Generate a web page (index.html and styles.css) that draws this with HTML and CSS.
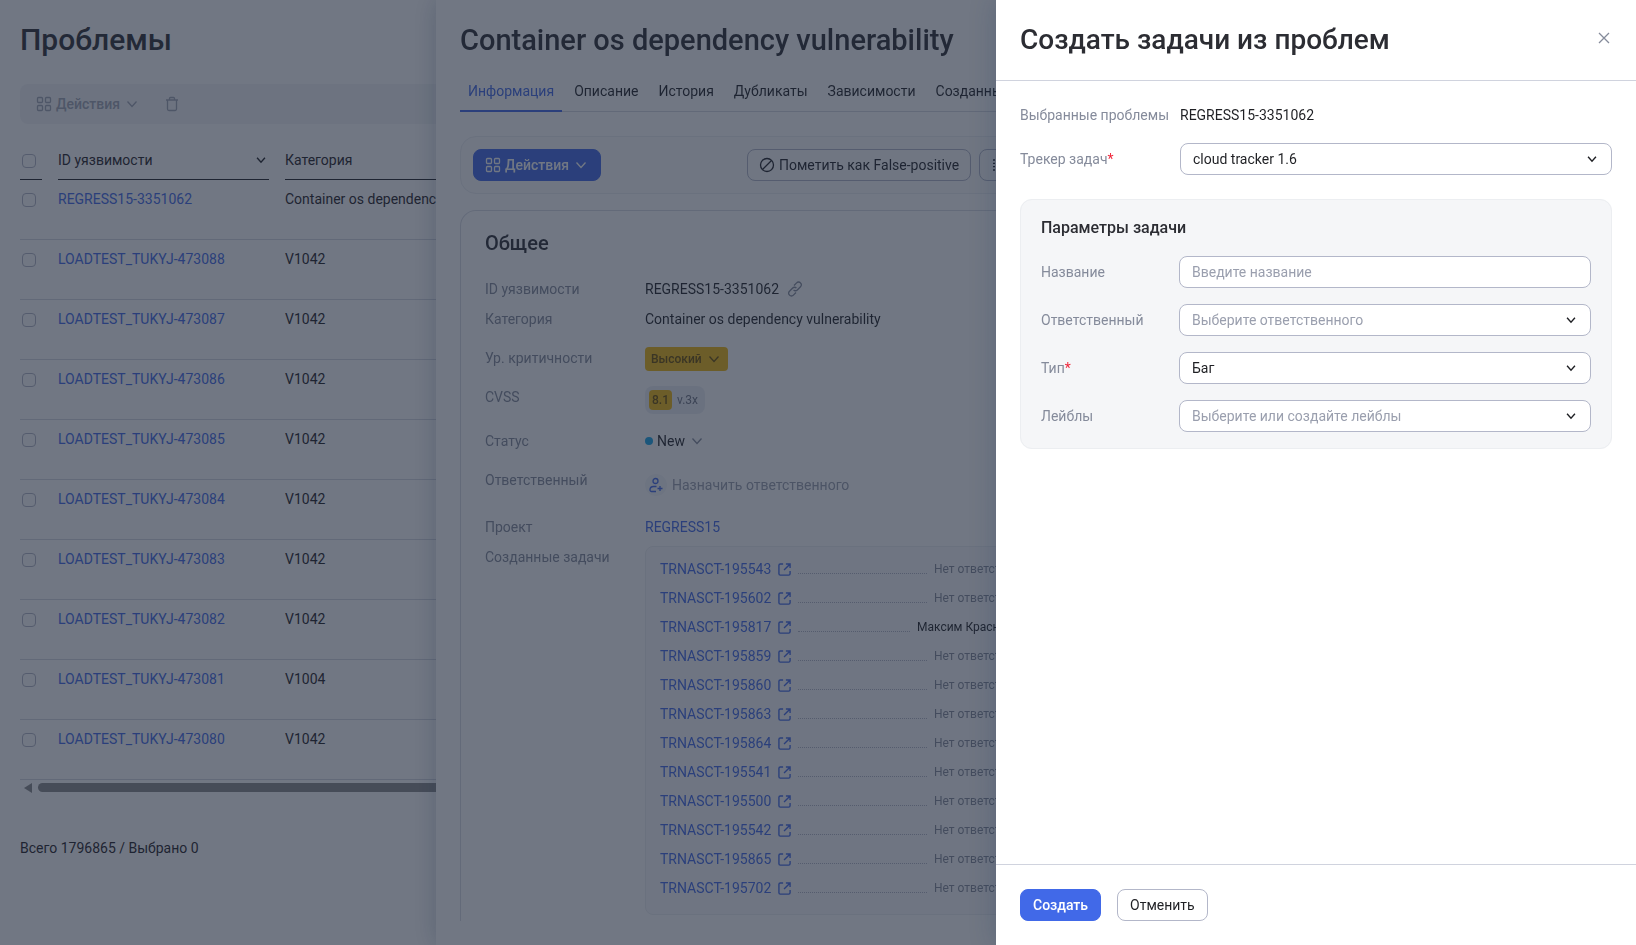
FILE: index.html
```
<!DOCTYPE html>
<html lang="ru">
<head>
    <meta charset="UTF-8">
    <meta name="viewport" content="width=device-width, initial-scale=1.0">
    <title>Проблемы</title>
    <link rel="stylesheet" href="styles.css">
</head>
<body>
    <!-- Набор иконок -->
    <svg class="sprite" aria-hidden="true">
        <symbol id="i-grid" viewBox="0 0 16 16"><rect x="1.5" y="1.5" width="5" height="5" rx="1"/><rect x="9.5" y="1.5" width="5" height="5" rx="1"/><rect x="1.5" y="9.5" width="5" height="5" rx="1"/><rect x="9.5" y="9.5" width="5" height="5" rx="1"/></symbol>
        <symbol id="i-chevron" viewBox="0 0 16 16"><path d="M3.5 5.5 8 10.5l4.500-5"/></symbol>
        <symbol id="i-trash" viewBox="0 0 16 16"><path d="M2 4h12M3.500 4v9a1.500 1.500 0 0 0 1.500 1.500h6a1.500 1.500 0 0 0 1.500-1.500V4M5.500 4V2.500a1 1 0 0 1 1-1h3a1 1 0 0 1 1 1V4"/></symbol>
        <symbol id="i-ban" viewBox="0 0 16 16"><circle cx="8" cy="8" r="6.500"/><path d="M3.500 12.500l9-9"/></symbol>
        <symbol id="i-list" viewBox="0 0 16 16"><path d="M2 3h12M2 6.300h12M2 9.700h12M2 13h12" stroke-dasharray="2 1"/></symbol>
        <symbol id="i-link" viewBox="0 0 16 16"><path d="M7 4.500l2.600-2.600a2.600 2.600 0 0 1 3.900 0 2.600 2.600 0 0 1 0 3.900l-3.200 3.200a2.600 2.600 0 0 1-3.700 0M9 11.500l-2.600 2.600a2.600 2.600 0 0 1-3.900 0 2.600 2.600 0 0 1 0-3.900L5.700 7a2.600 2.600 0 0 1 3.700 0"/></symbol>
        <symbol id="i-user" viewBox="0 0 16 16"><circle cx="7.500" cy="4" r="2.500"/><path d="M8 14.500H3.500a1.500 1.500 0 0 1-1.500-1.500c0-2 1.500-3.500 3.500-3.500h3M12 9v5M9.500 11.500h5"/></symbol>
        <symbol id="i-open" viewBox="0 0 14 14"><path d="M5.500 1H2.500A1.500 1.500 0 0 0 1 2.500v9A1.500 1.500 0 0 0 2.500 13h9a1.500 1.500 0 0 0 1.500-1.500V8.500M8.500 1H13v4.500M13 1 6.500 7.500"/></symbol>
        <symbol id="i-close" viewBox="0 0 12 12"><path d="M1 1l10 10M11 1 1 11"/></symbol>
    </svg>

    <!-- Список проблем -->
    <main class="page">
        <h1 class="title">Проблемы</h1>
        <div class="toolbar">
            <button class="tool-btn"><svg class="icon"><use href="#i-grid"/></svg>Действия<svg class="icon chevron"><use href="#i-chevron"/></svg></button>
            <button class="tool-btn" aria-label="Удалить"><svg class="icon"><use href="#i-trash"/></svg></button>
        </div>
        <table class="issues">
            <colgroup><col class="col-check"><col class="col-id"><col></colgroup>
            <thead>
                <tr>
                    <th><div class="head"><input type="checkbox" aria-label="Выбрать все"></div></th>
                    <th><div class="head">ID уязвимости<svg class="icon sort"><use href="#i-chevron"/></svg></div></th>
                    <th><div class="head">Категория</div></th>
                </tr>
            </thead>
            <tbody>
                <tr><td><input type="checkbox" aria-label="REGRESS15-3351062"></td><td><a href="#">REGRESS15-3351062</a></td><td>Container os dependency vulnerability</td></tr>
                <tr><td><input type="checkbox" aria-label="LOADTEST_TUKYJ-473088"></td><td><a href="#">LOADTEST_TUKYJ-473088</a></td><td>V1042</td></tr>
                <tr><td><input type="checkbox" aria-label="LOADTEST_TUKYJ-473087"></td><td><a href="#">LOADTEST_TUKYJ-473087</a></td><td>V1042</td></tr>
                <tr><td><input type="checkbox" aria-label="LOADTEST_TUKYJ-473086"></td><td><a href="#">LOADTEST_TUKYJ-473086</a></td><td>V1042</td></tr>
                <tr><td><input type="checkbox" aria-label="LOADTEST_TUKYJ-473085"></td><td><a href="#">LOADTEST_TUKYJ-473085</a></td><td>V1042</td></tr>
                <tr><td><input type="checkbox" aria-label="LOADTEST_TUKYJ-473084"></td><td><a href="#">LOADTEST_TUKYJ-473084</a></td><td>V1042</td></tr>
                <tr><td><input type="checkbox" aria-label="LOADTEST_TUKYJ-473083"></td><td><a href="#">LOADTEST_TUKYJ-473083</a></td><td>V1042</td></tr>
                <tr><td><input type="checkbox" aria-label="LOADTEST_TUKYJ-473082"></td><td><a href="#">LOADTEST_TUKYJ-473082</a></td><td>V1042</td></tr>
                <tr><td><input type="checkbox" aria-label="LOADTEST_TUKYJ-473081"></td><td><a href="#">LOADTEST_TUKYJ-473081</a></td><td>V1004</td></tr>
                <tr><td><input type="checkbox" aria-label="LOADTEST_TUKYJ-473080"></td><td><a href="#">LOADTEST_TUKYJ-473080</a></td><td>V1042</td></tr>
            </tbody>
        </table>
        <div class="scrollbar"><span class="scroll-arrow"></span><span class="scroll-thumb"></span></div>
        <p class="total">Всего 1796865 / Выбрано 0</p>
    </main>

    <!-- Карточка проблемы -->
    <section class="drawer details">
        <h2 class="title">Container os dependency vulnerability</h2>
        <nav class="tabs">
            <a href="#" class="tab active">Информация</a>
            <a href="#" class="tab">Описание</a>
            <a href="#" class="tab">История</a>
            <a href="#" class="tab">Дубликаты</a>
            <a href="#" class="tab">Зависимости</a>
            <a href="#" class="tab">Созданные задачи</a>
        </nav>
        <div class="actions">
            <button class="btn primary"><svg class="icon"><use href="#i-grid"/></svg>Действия<svg class="icon chevron"><use href="#i-chevron"/></svg></button>
            <div class="actions-right">
                <button class="btn"><svg class="icon"><use href="#i-ban"/></svg>Пометить как False-positive</button>
                <button class="btn" aria-label="Ещё"><svg class="icon"><use href="#i-list"/></svg></button>
            </div>
        </div>
        <div class="card">
            <h3 class="card-title">Общее</h3>
            <dl class="props">
                <dt>ID уязвимости</dt>
                <dd class="inline">REGRESS15-3351062<svg class="icon muted"><use href="#i-link"/></svg></dd>
                <dt>Категория</dt>
                <dd>Container os dependency vulnerability</dd>
                <dt>Ур. критичности</dt>
                <dd><button class="severity">Высокий<svg class="icon"><use href="#i-chevron"/></svg></button></dd>
                <dt>CVSS</dt>
                <dd><span class="cvss"><span class="score">8.1</span>v.3x</span></dd>
                <dt>Статус</dt>
                <dd><button class="status"><span class="dot"></span>New<svg class="icon muted"><use href="#i-chevron"/></svg></button></dd>
                <dt>Ответственный</dt>
                <dd><button class="assign"><span class="avatar"><svg class="icon"><use href="#i-user"/></svg></span>Назначить ответственного</button></dd>
                <dt>Проект</dt>
                <dd><a href="#">REGRESS15</a></dd>
                <dt>Созданные задачи</dt>
                <dd>
                    <ul class="tasks">
                        <li><a href="#">TRNASCT-195543<svg class="icon"><use href="#i-open"/></svg></a><span class="dots"></span><span class="who">Нет ответственного</span></li>
                        <li><a href="#">TRNASCT-195602<svg class="icon"><use href="#i-open"/></svg></a><span class="dots"></span><span class="who">Нет ответственного</span></li>
                        <li><a href="#">TRNASCT-195817<svg class="icon"><use href="#i-open"/></svg></a><span class="dots"></span><span class="who named">Максим Краснопёров</span></li>
                        <li><a href="#">TRNASCT-195859<svg class="icon"><use href="#i-open"/></svg></a><span class="dots"></span><span class="who">Нет ответственного</span></li>
                        <li><a href="#">TRNASCT-195860<svg class="icon"><use href="#i-open"/></svg></a><span class="dots"></span><span class="who">Нет ответственного</span></li>
                        <li><a href="#">TRNASCT-195863<svg class="icon"><use href="#i-open"/></svg></a><span class="dots"></span><span class="who">Нет ответственного</span></li>
                        <li><a href="#">TRNASCT-195864<svg class="icon"><use href="#i-open"/></svg></a><span class="dots"></span><span class="who">Нет ответственного</span></li>
                        <li><a href="#">TRNASCT-195541<svg class="icon"><use href="#i-open"/></svg></a><span class="dots"></span><span class="who">Нет ответственного</span></li>
                        <li><a href="#">TRNASCT-195500<svg class="icon"><use href="#i-open"/></svg></a><span class="dots"></span><span class="who">Нет ответственного</span></li>
                        <li><a href="#">TRNASCT-195542<svg class="icon"><use href="#i-open"/></svg></a><span class="dots"></span><span class="who">Нет ответственного</span></li>
                        <li><a href="#">TRNASCT-195865<svg class="icon"><use href="#i-open"/></svg></a><span class="dots"></span><span class="who">Нет ответственного</span></li>
                        <li><a href="#">TRNASCT-195702<svg class="icon"><use href="#i-open"/></svg></a><span class="dots"></span><span class="who">Нет ответственного</span></li>
                    </ul>
                </dd>
            </dl>
        </div>
    </section>

    <div class="overlay"></div>

    <!-- Создание задач -->
    <form class="drawer create">
        <header class="create-head">
            <h2 class="title">Создать задачи из проблем</h2>
            <button type="button" class="close-btn" aria-label="Закрыть"><svg class="icon"><use href="#i-close"/></svg></button>
        </header>
        <div class="create-body">
            <div class="field selected">
                <span class="label">Выбранные проблемы</span>
                <span>REGRESS15-3351062</span>
            </div>
            <div class="field">
                <label class="label" for="tracker">Трекер задач<span class="req">*</span></label>
                <div class="select">
                    <select id="tracker"><option>cloud tracker 1.6</option></select>
                    <svg class="icon"><use href="#i-chevron"/></svg>
                </div>
            </div>
            <fieldset class="params">
                <h3 class="params-title">Параметры задачи</h3>
                <div class="field">
                    <label class="label" for="name">Название</label>
                    <input type="text" id="name" class="input" placeholder="Введите название">
                </div>
                <div class="field">
                    <label class="label" for="assignee">Ответственный</label>
                    <div class="select empty">
                        <select id="assignee"><option>Выберите ответственного</option></select>
                        <svg class="icon"><use href="#i-chevron"/></svg>
                    </div>
                </div>
                <div class="field">
                    <label class="label" for="type">Тип<span class="req">*</span></label>
                    <div class="select">
                        <select id="type"><option>Баг</option></select>
                        <svg class="icon"><use href="#i-chevron"/></svg>
                    </div>
                </div>
                <div class="field">
                    <label class="label" for="labels">Лейблы</label>
                    <div class="select empty">
                        <select id="labels"><option>Выберите или создайте лейблы</option></select>
                        <svg class="icon"><use href="#i-chevron"/></svg>
                    </div>
                </div>
            </fieldset>
        </div>
        <footer class="create-foot">
            <button type="button" class="btn primary">Создать</button>
            <button type="button" class="btn">Отменить</button>
        </footer>
    </form>
</body>
</html>
```
FILE: styles.css
```
/* Общие стили */
* {
    margin: 0;
    padding: 0;
    box-sizing: border-box;
}

body {
    font-family: Roboto, 'Liberation Sans', sans-serif;
    font-size: 14px;
    line-height: 22px;
    color: #1f2024;
    background-color: #fff;
    height: 100vh;
    overflow: hidden;
}

button, input, select {
    font: inherit;
    color: inherit;
}

button {
    display: flex;
    align-items: center;
    background: none;
    border: none;
    cursor: pointer;
}

a {
    color: #4169e8;
    text-decoration: none;
}

.sprite {
    display: none;
}

.icon {
    width: 16px;
    height: 16px;
    flex: none;
    fill: none;
    stroke: currentColor;
    stroke-width: 1.3;
}

.title {
    font-size: 30px;
    line-height: 40px;
    font-weight: 500;
    color: #2c2d33;
    white-space: nowrap;
}

.drawer .title {
    font-size: 29px;
}

input[type="checkbox"] {
    appearance: none;
    display: block;
    width: 14px;
    height: 14px;
    margin: 5px 2px;
    border: 1px solid #b3b7c6;
    border-radius: 4px;
}

/* Список проблем */
.page {
    padding: 20px;
}

.toolbar {
    display: flex;
    align-items: center;
    gap: 24px;
    height: 40px;
    margin-top: 24px;
    padding: 0 16px;
    border-radius: 8px;
    background-color: #f4f5f7;
    color: #a0a5b4;
}

.tool-btn {
    gap: 4px;
    font-weight: 500;
}

.issues {
    width: 100%;
    margin-top: 20px;
    table-layout: fixed;
    border-spacing: 0;
}

.col-check {
    width: 38px;
}

.col-id {
    width: 227px;
}

.issues th {
    text-align: left;
    font-weight: 400;
    padding-right: 16px;
}

.head {
    display: flex;
    justify-content: space-between;
    align-items: flex-start;
    height: 36px;
    padding-top: 5px;
    border-bottom: 1px solid #1f2024;
}

.sort {
    width: 14px;
    height: 14px;
    margin: 4px 1px;
    stroke-width: 1.6;
}

.issues td {
    height: 60px;
    padding-top: 8px;
    vertical-align: top;
    border-bottom: 1px solid #d5d8e0;
}

.scrollbar {
    display: flex;
    align-items: center;
    gap: 6px;
    height: 15px;
    padding-left: 4px;
}

.scroll-arrow {
    border: 5px solid transparent;
    border-right: 8px solid #8b8b8b;
    border-left: 0;
}

.scroll-thumb {
    flex: 1;
    height: 9px;
    border-radius: 5px;
    background-color: #8b8b8b;
}

.total {
    margin-top: 42px;
}

/* Выдвижные панели */
.drawer {
    position: fixed;
    top: 0;
    right: 0;
    bottom: 0;
    max-width: 100%;
    background-color: #fff;
    box-shadow: 0 0 24px rgba(27, 56, 90, 0.25);
}

.overlay {
    position: fixed;
    inset: 0;
    background-color: rgba(30, 40, 58, 0.63);
}

.details {
    width: 1200px;
    padding: 20px 24px 24px;
    display: flex;
    flex-direction: column;
}

.tabs {
    display: flex;
    gap: 4px;
    margin-top: 20px;
    border-bottom: 1px solid #d5d8e0;
}

.tab {
    height: 32px;
    margin-bottom: -1px;
    padding: 0 8px;
    color: #1f2024;
    white-space: nowrap;
}

.tab.active {
    color: #4169e8;
    border-bottom: 2px solid #4169e8;
}

.actions {
    display: flex;
    gap: 146px;
    margin-top: 24px;
    padding: 12px;
    border: 1px solid #eceef1;
    border-radius: 16px;
    background-color: #fbfbfc;
}

.actions-right {
    display: flex;
    gap: 8px;
}

.btn {
    height: 32px;
    gap: 4px;
    padding: 0 11px;
    border: 1px solid #b3b7c9;
    border-radius: 8px;
}

.btn.primary {
    border-color: #4169e8;
    background-color: #4169e8;
    color: #fff;
    font-weight: 500;
}

.create-foot .btn {
    padding: 0 12px;
}

.card {
    flex: 1;
    min-height: 0;
    overflow: hidden;
    margin-top: 16px;
    padding: 19px 24px 0;
    border: 1px solid #d9dce4;
    border-bottom: none;
    border-radius: 16px 16px 0 0;
}

.card-title {
    font-size: 20px;
    line-height: 26px;
    font-weight: 500;
    color: #2c2d33;
}

.props {
    display: grid;
    grid-template-columns: 152px 414px;
    grid-template-rows: 22px 31px 31px 36px 31px 39px 22px auto;
    gap: 8px;
    margin-top: 22px;
}

.props dt {
    color: #858b9b;
}

.inline {
    display: flex;
    align-items: center;
    gap: 8px;
}

.muted {
    color: #858b9b;
}

.severity {
    height: 24px;
    gap: 4px;
    padding: 0 6px;
    border-radius: 4px;
    background-color: #f2b90c;
    color: #6b4e00;
    font-size: 12px;
    font-weight: 500;
}

.cvss {
    display: inline-flex;
    align-items: center;
    gap: 5px;
    height: 28px;
    padding: 0 7px 0 4px;
    border-radius: 8px;
    background-color: #edeff4;
    color: #6f7484;
    font-size: 12px;
}

.score {
    padding: 0 3px;
    line-height: 20px;
    border-radius: 4px;
    background-color: #f2b90c;
    color: #6b4e00;
    font-weight: 500;
}

.status {
    gap: 4px;
}

.dot {
    width: 8px;
    height: 8px;
    border-radius: 50%;
    background-color: #16a5e8;
}

.assign {
    gap: 5px;
    padding-top: 5px;
    color: #9a9fae;
}

.avatar {
    display: flex;
    padding: 3px;
    border-radius: 50%;
    background-color: #f5f6f9;
    color: #4169e8;
}

.tasks {
    display: flex;
    flex-direction: column;
    gap: 7px;
    padding: 11px 15px 15px 14px;
    list-style: none;
    border: 1px solid #eceef1;
    border-radius: 8px;
    background-color: #fafafb;
}

.tasks li {
    display: flex;
    gap: 7px;
}

.tasks a {
    display: flex;
    align-items: center;
    gap: 7px;
}

.tasks .icon {
    width: 13px;
    height: 13px;
    stroke-width: 1.5;
}

.dots {
    flex: 1;
    height: 16px;
    border-bottom: 1px dotted #b3b7c6;
}

.who {
    width: 109px;
    font-size: 12px;
    white-space: nowrap;
    color: #858b9b;
}

.who.named {
    width: 126px;
    color: #1f2024;
}

/* Форма создания задач */
.create {
    width: 640px;
    display: flex;
    flex-direction: column;
}

.create-head {
    display: flex;
    justify-content: space-between;
    padding: 20px 24px;
    border-bottom: 1px solid #d0d3de;
}

.create-head .title {
    font-size: 28px;
}

.close-btn {
    height: 36px;
    padding: 0 2px;
    color: #858b9b;
}

.close-btn .icon {
    width: 12px;
    height: 12px;
}

.create-body {
    flex: 1;
    padding: 23px 24px;
}

.field {
    display: flex;
    align-items: center;
    margin-bottom: 16px;
}

.field.selected {
    margin-bottom: 17px;
}

.label {
    flex: none;
    width: 160px;
    color: #858b9b;
}

.req {
    color: #f0283c;
}

.input, .select {
    flex: 1;
    min-width: 0;
    height: 32px;
    border: 1px solid #b3b7c9;
    border-radius: 8px;
    background-color: #fff;
}

.input {
    padding: 0 12px;
}

.input::placeholder {
    color: #9a9fae;
}

.select {
    position: relative;
}

.select select {
    width: 100%;
    height: 30px;
    padding: 0 12px;
    appearance: none;
    border: none;
    border-radius: 8px;
    background: none;
}

.select.empty select {
    color: #9a9fae;
}

.select .icon {
    position: absolute;
    top: 8px;
    right: 12px;
    width: 14px;
    height: 14px;
    stroke-width: 1.6;
    pointer-events: none;
}

.params {
    margin-top: 24px;
    padding: 16px 20px 0;
    border: 1px solid #eceef1;
    border-radius: 12px;
    background-color: #f5f6f8;
}

.params-title {
    margin-bottom: 16px;
    font-size: 16px;
    line-height: 24px;
    font-weight: 500;
    color: #2c2d33;
}

.params .label {
    width: 138px;
}

.create-foot {
    display: flex;
    gap: 16px;
    padding: 24px;
    border-top: 1px solid #d0d3de;
}
```
